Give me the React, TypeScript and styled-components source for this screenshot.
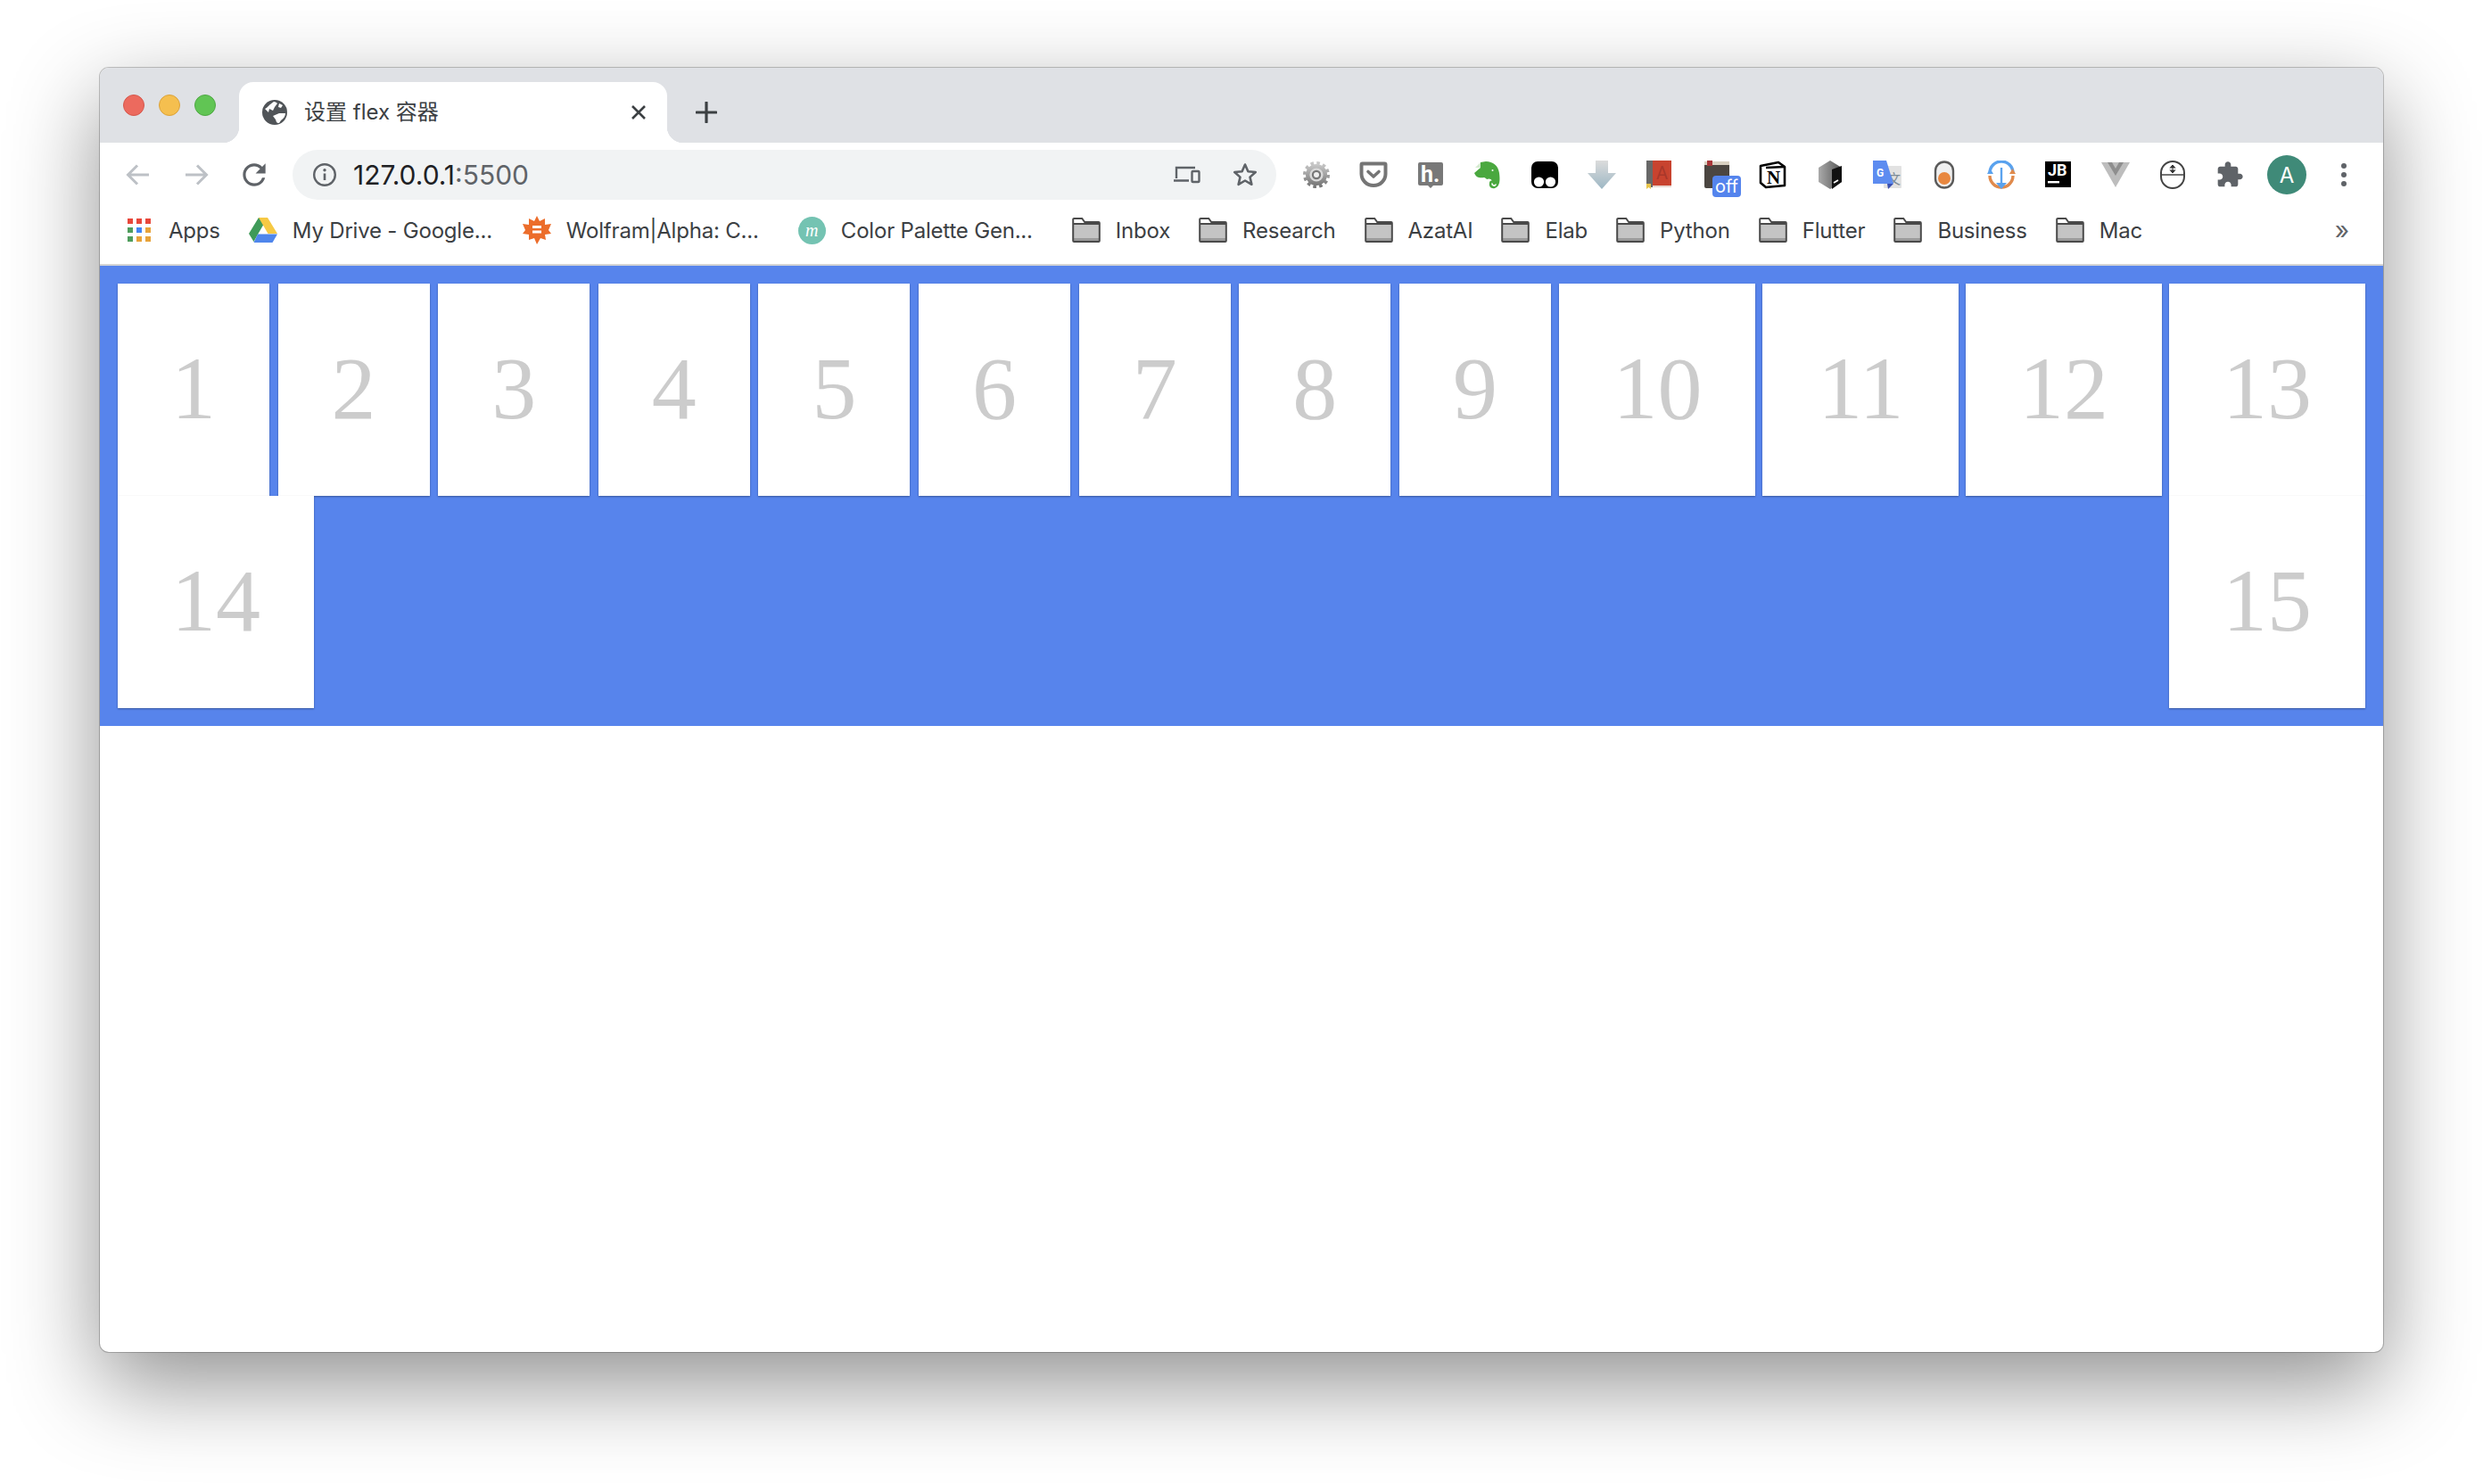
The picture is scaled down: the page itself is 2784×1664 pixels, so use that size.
import React from 'react';
import styled, { createGlobalStyle } from 'styled-components';

const GlobalStyle = createGlobalStyle`
  html, body {
    margin: 0;
    padding: 0;
    background: #fff;
  }
  body {
    font-family: Inter, "Noto Sans CJK SC", sans-serif;
  }
`;

const boxes = [1, 2, 3, 4, 5, 6, 7, 8, 9, 10, 11, 12, 13, 14, 15];

const folders = ['Inbox', 'Research', 'AzatAI', 'Elab', 'Python', 'Flutter', 'Business', 'Mac'];

const appColors = ['#e8473b', '#e8473b', '#e8473b', '#4f9d5d', '#4285f4', '#e8a33a', '#4f9d5d', '#e8a33a', '#e8a33a'];

function getExtensions(): React.ReactNode[] {
  return [
    <svg key="gear" width="32" height="32" viewBox="0 0 32 32">
      <defs>
        <linearGradient id="gearFill" x1="0" y1="0" x2="0" y2="1">
          <stop offset="0" stopColor="#c9c9c9" />
          <stop offset="1" stopColor="#777" />
        </linearGradient>
      </defs>
      <circle cx="16" cy="16" r="13.2" fill="none" stroke="url(#gearFill)" strokeWidth="3.6" strokeDasharray="3.6 3.3" />
      <circle cx="16" cy="16" r="12" fill="url(#gearFill)" />
      <circle cx="16" cy="16" r="7.6" fill="#d9d9d9" />
      <circle cx="16" cy="16" r="5.2" fill="#777" />
      <circle cx="16" cy="16" r="3" fill="#eee" />
    </svg>,
    <svg key="pocket" width="32" height="32" viewBox="0 0 32 32">
      <path d="M3.5 3.5h25a1 1 0 0 1 1 1V15a13.5 13 0 0 1-27 0V4.5a1 1 0 0 1 1-1z" fill="#fff" stroke="#757575" strokeWidth="4" />
      <path d="M10 12.5l6 5.5 6-5.5" fill="none" stroke="#757575" strokeWidth="3.6" strokeLinecap="round" strokeLinejoin="round" />
    </svg>,
    <svg key="h" width="32" height="32" viewBox="0 0 32 32">
      <path d="M4 2h24a2 2 0 0 1 2 2v22a2 2 0 0 1-2 2h-9l-3 3-3-3H4a2 2 0 0 1-2-2V4a2 2 0 0 1 2-2z" fill="#787878" />
      <text x="5" y="24" fontFamily="Roboto, sans-serif" fontWeight="700" fontSize="25" fill="#fff">h.</text>
    </svg>,
    <svg key="evernote" width="32" height="32" viewBox="0 0 32 32">
      <path
        d="M1 14L8 8V2l6-1c8 0 14 5 15 13 1 8 1 15-5 17-4 1-7-2-6-6 0-2 2-3 3-2-1-3-4-3-6-2-1-1-2-2-3-2-5 1-9 0-11-5z"
        fill="#4aa83f"
      />
      <path d="M8 2v6H2z" fill="#d5ebd0" />
      <path d="M21 26c0 2 3 3 4 1" fill="none" stroke="#fff" strokeWidth="1.6" strokeLinecap="round" />
      <circle cx="21.5" cy="11" r="1" fill="#fff" />
    </svg>,
    <svg key="tamper" width="32" height="32" viewBox="0 0 32 32">
      <rect x="1" y="1" width="30" height="30" rx="7" fill="#000" />
      <circle cx="9.5" cy="24" r="5.6" fill="#fff" />
      <circle cx="22.5" cy="24" r="5.6" fill="#fff" />
    </svg>,
    <svg key="arrow" width="32" height="32" viewBox="0 0 32 32">
      <defs>
        <linearGradient id="arrowFill" x1="0" y1="0" x2="0" y2="1">
          <stop offset="0" stopColor="#dcdcdc" />
          <stop offset="1" stopColor="#9db7c4" />
        </linearGradient>
      </defs>
      <path d="M9 0h14v14h9L16 32 0 14h9z" fill="url(#arrowFill)" />
    </svg>,
    <svg key="book" width="32" height="32" viewBox="0 0 32 32">
      <rect x="2" y="0" width="28" height="28" fill="#c8432f" />
      <rect x="2" y="0" width="7" height="30" fill="#686868" />
      <rect x="9" y="28" width="21" height="2" fill="#e8d8d0" />
      <text x="13" y="21" fontFamily="Roboto, sans-serif" fontSize="20" fill="#a8372a">A</text>
      <path d="M2 26h5v6l-2.5-2L2 32z" fill="#e8c44a" />
    </svg>,
    <OffIcon key="off">
      <svg width="32" height="32" viewBox="0 0 32 32">
        <rect x="3" y="1" width="28" height="30" rx="2" fill="#4b4641" />
        <rect x="3" y="1" width="28" height="4" fill="#d9d1c2" />
        <rect x="6" y="0" width="6" height="6" fill="#a8373a" />
      </svg>
      <OffBadge>off</OffBadge>
    </OffIcon>,
    <svg key="notion" width="32" height="32" viewBox="0 0 32 32">
      <path d="M2 6L22 2l7 5v21L8 30 2 25z" fill="#fff" stroke="#000" strokeWidth="2.6" strokeLinejoin="round" />
      <path d="M8 8l21-1" stroke="#000" strokeWidth="2.6" />
      <text x="9" y="26" fontFamily="Liberation Serif, serif" fontWeight="700" fontSize="21" fill="#000">N</text>
    </svg>,
    <svg key="cube" width="32" height="32" viewBox="0 0 32 32">
      <defs>
        <linearGradient id="cubeFill" x1="0" y1="0" x2="1" y2="0">
          <stop offset="0" stopColor="#aaa" />
          <stop offset="1" stopColor="#555" />
        </linearGradient>
      </defs>
      <path d="M16 0L29 8v16l-13 8-13-8V8z" fill="url(#cubeFill)" />
      <path d="M18 10l11-4v18l-11 8z" fill="#111" />
      <path d="M20 25l5-3" stroke="#fff" strokeWidth="1.8" />
    </svg>,
    <svg key="translate" width="32" height="32" viewBox="0 0 32 32">
      <rect x="12" y="6" width="20" height="25" rx="1" fill="#e2e2e2" />
      <text x="16" y="26" fontFamily="Noto Sans CJK SC, sans-serif" fontSize="15" fill="#7d8b95">文</text>
      <path d="M16 26l7 0-6 6z" fill="#3a50b0" />
      <path d="M0 0h15l8 26H0z" fill="#5d8cf0" />
      <text x="4" y="18" fontFamily="Roboto, sans-serif" fontWeight="700" fontSize="12" fill="#fff">G</text>
    </svg>,
    <svg key="toggle" width="32" height="32" viewBox="0 0 32 32">
      <rect x="6" y="1.5" width="20" height="29" rx="10" fill="#efefef" stroke="#5a5a5a" strokeWidth="2.4" />
      <circle cx="16" cy="20" r="7" fill="#e8873f" />
    </svg>,
    <svg key="circular" width="32" height="32" viewBox="0 0 32 32">
      <path d="M3 14a13 13 0 0 1 26 0" fill="none" stroke="#5aa2ee" strokeWidth="3.4" />
      <path d="M29 17a13 13 0 0 1-26 0" fill="none" stroke="#e08a4c" strokeWidth="3.4" />
      <path d="M0 15h7L3.500 9z" fill="#5aa2ee" />
      <path d="M25 15h7l-3.500-6z" fill="#e08a4c" />
      <path d="M16 8v18" stroke="#5aa2ee" strokeWidth="2.4" />
      <path d="M10 25h12l-6 7z" fill="#5aa2ee" />
    </svg>,
    <svg key="jb" width="32" height="32" viewBox="0 0 32 32">
      <rect x="1" y="1" width="29" height="29" fill="#000" />
      <text x="4" y="17" fontFamily="Roboto, sans-serif" fontWeight="700" fontSize="18" fill="#fff">JB</text>
      <rect x="4" y="23" width="13" height="2.4" fill="#fff" />
    </svg>,
    <svg key="vue" width="32" height="32" viewBox="0 0 32 32">
      <path d="M0 2h32L16 30z" fill="#bdbdbd" />
      <path d="M7 2h18l-9 15z" fill="#8e8e8e" />
      <path d="M12 2h8l-4 7z" fill="#bdbdbd" />
    </svg>,
    <svg key="mouse" width="32" height="32" viewBox="0 0 32 32">
      <rect x="3" y="1" width="26" height="30" rx="13" fill="#fff" stroke="#444" strokeWidth="2" />
      <path d="M3 16h26" stroke="#444" strokeWidth="1.6" />
      <path d="M16 6v7M13 8.500L16 5l3 3.500M13 10.500l3 3.500 3-3.500" fill="#333" stroke="#333" strokeWidth="1" />
    </svg>,
    <svg key="puzzle" width="32" height="32" viewBox="0 0 24 24">
      <path
        d="M20.5 11H19V7c0-1.1-.9-2-2-2h-4V3.5C13 2.12 11.88 1 10.5 1S8 2.12 8 3.5V5H4c-1.1 0-1.99.9-1.99 2v3.8H3.5c1.49 0 2.7 1.21 2.7 2.7s-1.21 2.7-2.7 2.7H2V20c0 1.1.9 2 2 2h3.8v-1.5c0-1.49 1.21-2.7 2.7-2.7 1.49 0 2.7 1.21 2.7 2.7V22H17c1.1 0 2-.9 2-2v-4h1.5c1.38 0 2.5-1.12 2.5-2.5S21.88 11 20.5 11z"
        fill="#5f6368"
      />
    </svg>,
    <Avatar key="avatar">A</Avatar>,
    <svg key="menu" width="32" height="32" viewBox="0 0 32 32">
      <circle cx="16" cy="6" r="3" fill="#5f6368" />
      <circle cx="16" cy="16" r="3" fill="#5f6368" />
      <circle cx="16" cy="26" r="3" fill="#5f6368" />
    </svg>,
  ];
}

function FolderIcon() {
  return (
    <svg width="32" height="28" viewBox="0 0 32 28">
      <path d="M1.2 5V2a1 1 0 0 1 1-1h9l3 4h15.6a1 1 0 0 1 1 1v20a1 1 0 0 1-1 1H2.2a1 1 0 0 1-1-1z" fill="#fff" />
      <rect x="1" y="8" width="30" height="18" fill="#c4c4c4" />
      <rect x="1" y="23" width="30" height="4" fill="#9a9a9a" />
      <path d="M1.2 5V2a1 1 0 0 1 1-1h9l3 4h15.6a1 1 0 0 1 1 1v20a1 1 0 0 1-1 1H2.2a1 1 0 0 1-1-1z M1.2 7h29.6" fill="none" stroke="#4a4a4a" strokeWidth="2" />
    </svg>
  );
}

export default function App() {
  return (
    <>
      <GlobalStyle />
      <Page>
        <BrowserWindow>
          <TabStrip>
            <TrafficLights>
              <Light $color="#ec6a5e" $edge="#d5574c" />
              <Light $color="#f5bf4f" $edge="#dba23a" />
              <Light $color="#61c554" $edge="#4ea843" />
            </TrafficLights>
            <Tab>
              <svg width="28" height="28" viewBox="0 0 28 28">
                <circle cx="14" cy="14" r="14" fill="#505458" />
                <path d="M3 10c3-1 5-5 10-8 2 0 3 1 4 2l-3 4-2 4-4-2-1 4z" fill="#fff" />
                <path d="M12 18l7-3 7 0c0 3-2 6-5 8l-2 3c-1 0-2 0-3-1l-1-3z" fill="#fff" />
                <path d="M19 4l4 2-2 3-3-1z" fill="#fff" />
              </svg>
              <TabTitle>设置 flex 容器</TabTitle>
              <svg width="18" height="18" viewBox="0 0 18 18">
                <path d="M2 2l14 14M16 2L2 16" stroke="#3c4043" strokeWidth="2.6" />
              </svg>
            </Tab>
            <NewTab>
              <svg width="24" height="24" viewBox="0 0 24 24">
                <path d="M12 1v22M1 12h22" stroke="#3c4043" strokeWidth="3.2" strokeLinecap="round" />
              </svg>
            </NewTab>
          </TabStrip>

          <Toolbar>
            <NavButton>
              <svg width="28" height="28" viewBox="0 0 28 28">
                <path d="M26 14H3M13 3.5L2.5 14 13 24.5" fill="none" stroke="#bdc1c6" strokeWidth="3" />
              </svg>
            </NavButton>
            <NavButton>
              <svg width="28" height="28" viewBox="0 0 28 28">
                <path d="M2 14h23M15 3.5L25.5 14 15 24.5" fill="none" stroke="#bdc1c6" strokeWidth="3" />
              </svg>
            </NavButton>
            <NavButton>
              <svg width="38" height="38" viewBox="0 0 24 24">
                <path
                  d="M17.65 6.35A7.96 7.96 0 0 0 12 4c-4.42 0-7.99 3.58-7.99 8s3.57 8 7.99 8c3.73 0 6.84-2.55 7.73-6h-2.08A5.99 5.99 0 0 1 12 18c-3.31 0-6-2.69-6-6s2.69-6 6-6c1.66 0 3.14.69 4.22 1.78L13 11h7V4l-2.35 2.35z"
                  fill="#5f6368"
                />
              </svg>
            </NavButton>
            <AddressBar>
              <svg width="28" height="28" viewBox="0 0 28 28">
                <circle cx="14" cy="14" r="11.8" fill="none" stroke="#5f6368" strokeWidth="2.4" />
                <path d="M14 12.5V20" stroke="#5f6368" strokeWidth="2.6" />
                <circle cx="14" cy="8.8" r="1.7" fill="#5f6368" />
              </svg>
              <Url>
                127.0.0.1<UrlPort>:5500</UrlPort>
              </Url>
              <AddressActions>
                <AddressAction>
                  <svg width="32" height="24" viewBox="0 0 32 24">
                    <path d="M4 16V4h21M1 18.5h17" fill="none" stroke="#5f6368" strokeWidth="2.4" />
                    <rect x="21.5" y="8" width="8" height="12" rx="1" fill="none" stroke="#5f6368" strokeWidth="2.4" />
                  </svg>
                </AddressAction>
                <AddressAction>
                  <svg width="30" height="30" viewBox="0 0 30 30">
                    <path d="M15 3.5l3.4 7.7 8.4.8-6.3 5.6 1.9 8.2-7.4-4.3-7.4 4.3 1.9-8.2-6.3-5.6 8.4-.8z" fill="none" stroke="#5f6368" strokeWidth="2.6" strokeLinejoin="round" />
                  </svg>
                </AddressAction>
              </AddressActions>
            </AddressBar>
            <Extensions>
              {getExtensions().map((icon, index) => (
                <ExtensionCell key={index}>{icon}</ExtensionCell>
              ))}
            </Extensions>
          </Toolbar>

          <BookmarkBar>
            <Bookmark>
              <AppsGrid>
                {appColors.map((color, index) => (
                  <AppsDot key={index} $color={color} />
                ))}
              </AppsGrid>
              <BookmarkLabel $first>Apps</BookmarkLabel>
            </Bookmark>
            <Bookmark>
              <svg width="32" height="28" viewBox="0 0 32 28">
                <path d="M11 0h10L10.5 18 5.5 27 0 18z" fill="#3f9a59" />
                <path d="M11 0h10l11 18H21.5z" fill="#f6c944" />
                <path d="M10 18.5h22L26.5 28h-21z" fill="#4f86ec" />
              </svg>
              <BookmarkLabel $width={226}>My Drive - Google...</BookmarkLabel>
            </Bookmark>
            <Bookmark>
              <svg width="32" height="32" viewBox="0 0 32 32">
                <path d="M16 0l3 6 6-3 0 7 7-1-3 7 3 4-7 1 1 6-6-2-4 7-3-7-6 2 0-6-7-1 3-4-3-7 7 1 0-7 6 3z" fill="#ec6d2b" />
                <path d="M11 12.5h10M11 18h10" stroke="#fff" strokeWidth="3" />
              </svg>
              <BookmarkLabel $width={228}>Wolfram|Alpha: C...</BookmarkLabel>
            </Bookmark>
            <Bookmark>
              <PaletteBadge>m</PaletteBadge>
              <BookmarkLabel $width={227}>Color Palette Gen...</BookmarkLabel>
            </Bookmark>
            {folders.map((name) => (
              <Bookmark key={name}>
                <FolderIcon />
                <BookmarkLabel>{name}</BookmarkLabel>
              </Bookmark>
            ))}
            <MoreBookmarks>»</MoreBookmarks>
          </BookmarkBar>

          <Container>
            {boxes.map((n) => (
              <Box key={n} $wide={n >= 10}>
                {n}
              </Box>
            ))}
          </Container>
        </BrowserWindow>
      </Page>
    </>
  );
}

const Page = styled.div`
  width: 2784px;
  height: 1664px;
  padding: 76px 112px 0;
  box-sizing: border-box;
  overflow: hidden;
`;

const BrowserWindow = styled.div`
  width: 2560px;
  height: 1440px;
  background: #fff;
  border-radius: 10px;
  overflow: hidden;
  box-shadow: 0 0 0 1px rgba(0, 0, 0, 0.22), 0 36px 100px rgba(0, 0, 0, 0.44);
`;

const TabStrip = styled.div`
  display: flex;
  align-items: flex-end;
  height: 84px;
  padding-left: 26px;
  background: #dfe1e5;
`;

const TrafficLights = styled.div`
  display: flex;
  gap: 16px;
  align-self: center;
  margin-right: 26px;
`;

const Light = styled.span<{ $color: string; $edge: string }>`
  width: 24px;
  height: 24px;
  box-sizing: border-box;
  border-radius: 50%;
  background: ${(p) => p.$color};
  border: 1px solid ${(p) => p.$edge};
`;

const Tab = styled.div`
  position: relative;
  display: flex;
  align-items: center;
  gap: 19px;
  width: 480px;
  height: 68px;
  box-sizing: border-box;
  padding: 0 23px 0 26px;
  background: #fff;
  border-radius: 16px 16px 0 0;

  &::before,
  &::after {
    content: '';
    position: absolute;
    bottom: 0;
    width: 18px;
    height: 18px;
  }
  &::before {
    left: -18px;
    background: radial-gradient(circle at 0 0, #dfe1e5 18px, #fff 18.5px);
  }
  &::after {
    right: -18px;
    background: radial-gradient(circle at 100% 0, #dfe1e5 18px, #fff 18.5px);
  }
`;

const TabTitle = styled.span`
  flex: 1;
  color: #3c4043;
  font-size: 24px;
  line-height: 32px;
`;

const NewTab = styled.div`
  display: flex;
  align-items: center;
  height: 68px;
  margin-left: 32px;
`;

const Toolbar = styled.div`
  display: flex;
  align-items: center;
  height: 56px;
  padding: 8px 12px 0 10px;
`;

const NavButton = styled.div`
  display: flex;
  align-items: center;
  justify-content: center;
  width: 65px;
  height: 56px;
`;

const AddressBar = styled.div`
  display: flex;
  align-items: center;
  flex: 1;
  height: 56px;
  margin: 0 13px 0 11px;
  padding: 0 3px 0 22px;
  background: #f1f3f4;
  border-radius: 28px;
`;

const Url = styled.span`
  margin-left: 18px;
  color: #202124;
  font-size: 30px;
`;

const UrlPort = styled.span`
  color: #5f6368;
`;

const AddressActions = styled.div`
  display: flex;
  margin-left: auto;
`;

const AddressAction = styled.div`
  display: flex;
  align-items: center;
  justify-content: center;
  width: 65px;
  height: 56px;
`;

const Extensions = styled.div`
  display: flex;
`;

const ExtensionCell = styled.div`
  display: flex;
  align-items: center;
  justify-content: center;
  width: 64px;
  height: 56px;
`;

const OffIcon = styled.div`
  position: relative;
  width: 32px;
  height: 32px;
`;

const OffBadge = styled.span`
  position: absolute;
  left: 12px;
  top: 17px;
  width: 32px;
  height: 24px;
  background: #5484ed;
  border-radius: 4px;
  color: #fff;
  font-size: 20px;
  line-height: 24px;
  text-align: center;
`;

const Avatar = styled.div`
  display: flex;
  align-items: center;
  justify-content: center;
  width: 44px;
  height: 44px;
  border-radius: 50%;
  background: #3f8a78;
  color: #fff;
  font-size: 24px;
`;

const BookmarkBar = styled.div`
  display: flex;
  align-items: center;
  height: 74px;
  box-sizing: border-box;
  padding: 6px 31px 10px;
  border-bottom: 2px solid #d4d4d4;
`;

const Bookmark = styled.div`
  display: flex;
  align-items: center;
  gap: 17px;
  margin-right: 32px;
`;

const BookmarkLabel = styled.span<{ $width?: number; $first?: boolean }>`
  ${(p) => (p.$width ? `width: ${p.$width}px;` : '')}
  ${(p) => (p.$first ? 'margin-left: 3px;' : '')}
  color: #3c4043;
  font-size: 24px;
  letter-spacing: -0.2px;
  white-space: nowrap;
`;

const AppsGrid = styled.div`
  display: grid;
  grid-template-columns: repeat(3, 6px);
  gap: 4px;
`;

const AppsDot = styled.span<{ $color: string }>`
  width: 6px;
  height: 6px;
  background: ${(p) => p.$color};
`;

const PaletteBadge = styled.span`
  display: flex;
  align-items: center;
  justify-content: center;
  width: 31px;
  height: 31px;
  border-radius: 50%;
  background: #74c3b2;
  color: #fff;
  font-family: "Liberation Serif", serif;
  font-style: italic;
  font-size: 20px;
`;

const MoreBookmarks = styled.span`
  margin-left: auto;
  margin-right: 7px;
  color: #5f6368;
  font-size: 28px;
`;

const Container = styled.div`
  display: flex;
  flex-wrap: wrap;
  justify-content: space-between;
  padding: 20px;
  background: #5784ec;
`;

const Box = styled.div<{ $wide: boolean }>`
  display: flex;
  align-items: center;
  justify-content: center;
  width: ${(p) => (p.$wide ? 220 : 170)}px;
  height: 238px;
  box-sizing: border-box;
  padding-bottom: 3px;
  margin-right: ${(p) => (p.$wide ? 0 : 1.8)}px;
  background: #fff;
  box-shadow: 0 1px 2px rgba(0, 0, 0, 0.35);
  color: #ccc;
  font-family: "Liberation Serif", serif;
  font-size: 100px;
`;
